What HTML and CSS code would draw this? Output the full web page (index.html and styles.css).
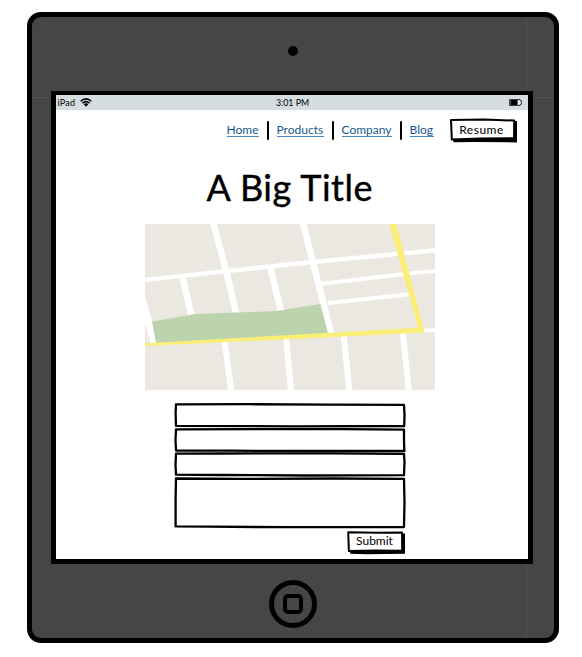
FILE: index.html
```html
<!DOCTYPE html>
<html lang="en">
<head>
<meta charset="utf-8">
<title>A Big Title</title>
<link rel="stylesheet" href="styles.css">
</head>
<body>
<div class="tablet">
  <div class="camera"></div>
  <div class="screen">
    <header class="status">
      <div class="device"><span class="device-name">iPad</span>
        <svg class="wifi" width="12" height="9" viewBox="0 0 12 9"><path d="M.6 3.2Q6-1.4 11.4 3.2M2.4 5.1Q6 2.1 9.6 5.1M4.1 6.7Q6 5.3 7.9 6.7" fill="none" stroke="#000" stroke-width="1.5"/><path d="M4.6 7.2Q6 6.2 7.4 7.2L6 8.8z"/></svg>
      </div>
      <span class="time">3:01 PM</span>
      <svg class="battery" width="13" height="7" viewBox="0 0 13 7"><path d="M.5.5h10.6v1.2h1.3v3.6h-1.3v1.2H.5z" fill="#eef0e8" stroke="#222" stroke-width=".9"/><path d="M1.4 1h7.2v5H1.4z"/></svg>
    </header>
    <nav class="nav">
      <a class="home" href="#">Home</a><i class="rule"></i>
      <a class="products" href="#">Products</a><i class="rule"></i>
      <a class="company" href="#">Company</a><i class="rule"></i>
      <a class="blog" href="#">Blog</a>
      <button class="btn resume"><svg class="sketch" width="68" height="25" viewBox="0 0 68 25"><path d="M3 20h60V2.9l4 .2V24.4L24 24 3.5 24.3z"/><path d="M1 2L34 1.4l30.2 1.2-.2 17.6-34 .4-28.2.8z" fill="#fff" stroke="#000" stroke-width="2" stroke-linejoin="round"/></svg><span>Resume</span></button>
    </nav>
    <h1 class="title">A Big Title</h1>
    <svg class="map" width="290" height="166" viewBox="0 0 290 166">
      <path d="M0 0h290v166H0z" fill="#ebe8e2"/>
      <g stroke="#fff" fill="none" stroke-width="6.5">
        <path d="M-2 56.1L145 40.3 292 26.1" stroke-width="4.4"/>
        <path d="M68 -2L81.3 47.3 91.3 90M37.7 54L46.5 92M125.2 43L136.3 88M157.8 -2L186.2 110"/>
        <path d="M177 59.8L258 50.1 292 46.7M183 79.1L264 70.2M278 106.6L292 106" stroke-width="3.9"/>
        <path d="M79.5 116L86.3 168M141 113L146.2 168M198.6 111L204.6 168M257.8 108L263.9 168" stroke-width="6"/>
      </g>
      <path d="M0 72.3L7.5 97.5 11.3 119 5.7 119.8 0 99z" fill="#fff"/>
      <path d="M7 97.4L50 90.1 131.7 87.1 175.4 80 183.2 109.7 11 119z" fill="#bcd4ad"/>
      <path d="M0 119.2L145 111 273.3 103.7 279.6 108.4 145 115.2 0 122z" fill="#faee76"/>
      <path d="M244.2 0H251.3L279.6 108.4 273.3 104z" fill="#faee76"/>
    </svg>
    <form class="form">
      <div class="field"><svg class="sketch" width="232" height="25" viewBox="0 0 232 25"><path d="M2 1.4L75 1.2 155 1.7 230 1.8 230.5 12 230.2 23 120 23.3 2 22.8 1.6 10z"/></svg><input aria-label="Name"></div>
      <div class="field"><svg class="sketch" width="232" height="25" viewBox="0 0 232 25"><path d="M2 1.4L90 1.1 170 1.2 230 1.6 230 13 230.4 23 140 23 55 22.7 2 22.5 1.5 12z"/></svg><input aria-label="Email"></div>
      <div class="field"><svg class="sketch" width="232" height="25" viewBox="0 0 232 25"><path d="M2 1.6L50 1.5 160 1.3 230 1.8 230.5 10 230 23.2 130 23.5 45 23 2 22.6 1.5 13z"/></svg><input aria-label="Phone"></div>
      <div class="field message"><svg class="sketch" width="232" height="52" viewBox="0 0 232 52"><path d="M2 1.5L70 1.9 160 1.5 230 1.8 230.5 25 230 50 110 50.2 35 49.7 1.6 49.4 1.6 22z"/></svg><textarea aria-label="Message"></textarea></div>
      <button type="button" class="btn submit"><svg class="sketch" width="60" height="24" viewBox="0 0 60 24"><path d="M3 19h51V2.4l4 .2V22.8L20 23.2 3.2 22.7z"/><path d="M1.2 1.2L30 1.7l25-.2.2 18.2-27-.3-26.3.7z" fill="#fff" stroke="#000" stroke-width="2" stroke-linejoin="round"/></svg><span>Submit</span></button>
    </form>
  </div>
  <div class="home-button"></div>
</div>
</body>
</html>
```

FILE: styles.css
```css
*, *::before { box-sizing: border-box; }
body {
  margin: 0;
  padding: 12px 0 0 27px;
  background: #fff;
  color: #000;
  font-family: Lato, "Open Sans", sans-serif;
}
.tablet {
  width: 532px;
  height: 631px;
  border: 5px solid #000;
  border-radius: 14px;
  background:
    linear-gradient(#525252, #525252) 494px 0 / 1px 100% no-repeat,
    linear-gradient(#525252, #525252) 0 80px / 100% 1px no-repeat,
    #464646;
  display: flex;
  flex-direction: column;
  align-items: center;
  padding-top: 29px;
}
.camera {
  width: 10px;
  height: 10px;
  border-radius: 50%;
  background: #000;
}
.screen {
  width: 482px;
  height: 473px;
  margin: 35px 3px 0 0;
  border: 5px solid #000;
  border-top-width: 4px;
  background: #fff;
  display: flex;
  flex-direction: column;
}
.status {
  height: 15px;
  padding: 0 6px 0 2px;
  background: #d6dde0;
  display: grid;
  grid-template-columns: 1fr auto 1fr;
  align-items: center;
  font-size: 9px;
  line-height: 13px;
}
.device { display: flex; align-items: center; gap: 5px; }
.device-name { letter-spacing: .2px; }
.time { margin-left: 6px; font-size: 8.8px; }
.status span { padding-bottom: 1px; }
.battery { justify-self: end; }
.nav {
  height: 25px;
  margin: 8px 10px 0 0;
  display: flex;
  align-items: center;
  justify-content: flex-end;
  font-size: 12px;
}
.nav a {
  height: 13px;
  margin-bottom: 1px;
  line-height: 11px;
  color: #18588f;
  border-bottom: 1px solid #4b86ba;
  text-decoration: none;
  white-space: nowrap;
}
.home { width: 32px; }
.products { width: 47px; }
.company { width: 50px; }
.blog { width: 24px; }
.rule {
  width: 2px;
  height: 19px;
  margin: 0 8px;
  background: #000;
  border-radius: 1px;
}
.btn {
  position: relative;
  padding: 0;
  border: 0;
  background: none;
  color: #000;
  font: 12px Lato, "Open Sans", sans-serif;
}
.btn span { position: relative; }
.sketch { position: absolute; left: 0; top: 0; }
.resume { width: 68px; height: 25px; margin-left: 16px; padding: 0 4px 3px 0; letter-spacing: .5px; }
.submit { width: 60px; height: 24px; margin: 0 0 0 173px; padding: 0 4px 5px 0; }
.title {
  height: 44px;
  margin: 22px 0 0 151px;
  font-size: 36px;
  font-weight: 400;
  line-height: 44px;
  letter-spacing: .5px;
  white-space: nowrap;
  -webkit-text-stroke: .4px #000;
}
.map { display: block; margin: 15px 0 0 89px; }
.form { width: 232px; margin: 13px 0 0 118px; }
.field { position: relative; height: 24.7px; }
.message { height: 51.5px; }
.field path { fill: #fff; stroke: #000; stroke-width: 2.3; stroke-linejoin: round; }
.field input, .field textarea {
  position: relative;
  display: block;
  width: 100%;
  height: 24px;
  padding: 0 6px;
  border: 0;
  outline: 0;
  resize: none;
  background: transparent;
}
.field textarea { height: 50px; }
.home-button {
  width: 48px;
  height: 48px;
  margin-top: 16px;
  border: 5px solid #000;
  border-radius: 50%;
  display: grid;
  place-items: center;
}
.home-button::before {
  content: "";
  width: 20px;
  height: 20px;
  border: 4px solid #000;
  border-radius: 5px;
}
```
